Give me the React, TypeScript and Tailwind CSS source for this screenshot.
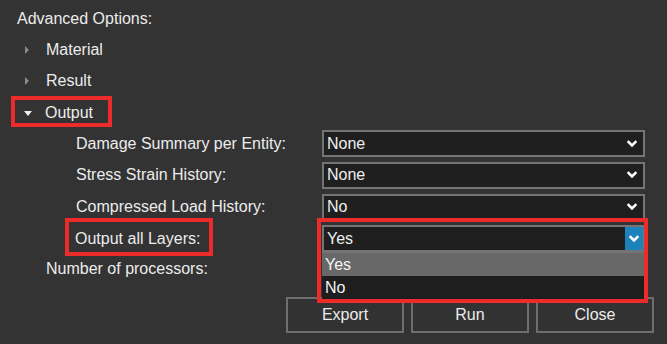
import React from "react";

const Chevron = ({ color = "#ffffff" }: { color?: string }) => (
  <svg width="10" height="8" viewBox="0 0 10 8">
    <polyline points="1.5,2 5,5.5 8.5,2" fill="none" stroke={color} strokeWidth="2.6" strokeLinecap="square" />
  </svg>
);

const Combo = ({ value }: { value: string }) => (
  <div className="w-[323px] h-[27px] border-2 border-[#747474] bg-[#1f1f1f] flex items-center justify-between pl-[3px] pr-[6px]">
    <span className="text-[#f0f0f0]">{value}</span>
    <Chevron />
  </div>
);

const Row = ({
  indent,
  label,
  children,
  h = "h-[31px]",
}: {
  indent: number;
  label: React.ReactNode;
  children?: React.ReactNode;
  h?: string;
}) => (
  <div className={`${h} flex items-center`}>
    <div className="w-[322px] flex items-center" style={{ paddingLeft: indent }}>
      {label}
    </div>
    {children}
  </div>
);

export default function App() {
  return (
    <div
      className="relative w-[667px] h-[344px] bg-[#333333] text-[#ececec] text-[16px] overflow-hidden"
      style={{ fontFamily: '"Liberation Sans", Arial, sans-serif' }}
    >
      <div className="pt-[4px] flex flex-col">
        <Row indent={17} label={<span>Advanced Options:</span>} h="h-[30px]" />
        <Row
          indent={25}
          label={
            <>
              <span className="w-0 h-0 border-y-[4px] border-y-transparent border-l-[4px] border-l-[#8a8a8a] mr-[17px]" />
              <span>Material</span>
            </>
          }
        />
        <Row
          indent={25}
          h="h-[32px]"
          label={
            <>
              <span className="w-0 h-0 border-y-[4px] border-y-transparent border-l-[4px] border-l-[#8a8a8a] mr-[17px]" />
              <span>Result</span>
            </>
          }
        />
        <Row
          indent={24}
          label={
            <>
              <span className="w-0 h-0 border-x-[4px] border-x-transparent border-t-[5px] border-t-[#f0f0f0] mr-[13px] mt-[2px]" />
              <span>Output</span>
            </>
          }
        />
        <Row indent={76} label={<span>Damage Summary per Entity:</span>}>
          <Combo value="None" />
        </Row>
        <Row indent={76} h="h-[32px]" label={<span>Stress Strain History:</span>}>
          <Combo value="None" />
        </Row>
        <Row indent={76} h="h-[32px]" label={<span>Compressed Load History:</span>}>
          <Combo value="No" />
        </Row>
        <Row indent={75} label={<span>Output all Layers:</span>}>
          <div className="w-[323px] h-[27px] border-2 border-[#747474] bg-[#1f1f1f] flex items-center justify-between pl-[3px]">
            <span className="text-[#f0f0f0]">Yes</span>
            <div className="w-[18px] h-full bg-[#1b82bb] flex items-center justify-center">
              <Chevron />
            </div>
          </div>
        </Row>
        <Row indent={46} h="h-[29px]" label={<span>Number of processors:</span>} />
        <div className="mt-[14px] pl-[286px] flex gap-[7px]">
          {["Export", "Run", "Close"].map((b) => (
            <div
              key={b}
              className="w-[118px] h-[36px] border-2 border-[#6e6e6e] bg-[#323232] flex items-center justify-center"
            >
              {b}
            </div>
          ))}
        </div>
      </div>

      {/* dropdown list */}
      <div className="absolute left-[322px] top-[251px] w-[323px] border-t-2 border-[#747474] bg-[#1e1e1e]">
        <div className="h-[23px] bg-[#686868] flex items-center pl-[3px] text-[#f4f4f4]">Yes</div>
        <div className="h-[23px] flex items-center pl-[3px] text-[#f4f4f4]">No</div>
      </div>

      {/* annotation boxes */}
      <div className="absolute left-[11px] top-[96px] w-[101px] h-[31px] border-[4px] border-[#ee2b2b]" />
      <div className="absolute left-[65px] top-[218px] w-[148px] h-[38px] border-[4px] border-[#ee2b2b]" />
      <div className="absolute left-[317px] top-[218px] w-[331px] h-[85px] border-[4px] border-[#ee2b2b]" />
    </div>
  );
}
